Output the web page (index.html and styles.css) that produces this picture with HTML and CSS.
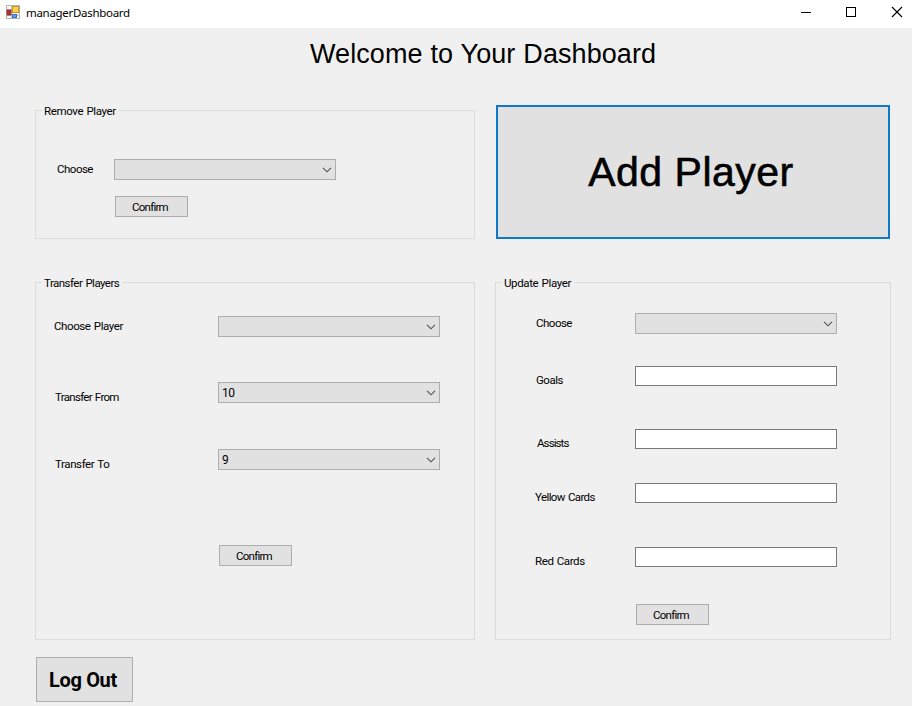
FILE: index.html
```html
<!DOCTYPE html>
<html lang="en">
<head>
<meta charset="utf-8">
<title>managerDashboard</title>
<link rel="stylesheet" href="styles.css">
</head>
<body>
<svg width="0" height="0" class="defs"><defs>
  <symbol id="chev" viewBox="0 0 10 6"><path d="M1 .8 5 4.8 9 .8" fill="none" stroke="#505050" stroke-width="1.1"/></symbol>
</defs></svg>
<header class="titlebar">
  <svg class="app-icon" width="14" height="14" viewBox="0 0 14 14">
    <rect x=".5" y=".5" width="13" height="13" fill="#f4f4f4" stroke="#b4b4b4"/>
    <path d="M5.500 1v12M1 4.500h5M1 10.500h12" stroke="#c4c4c4" fill="none"/>
    <rect x="1" y="5" width="4" height="5" fill="#b8342e" stroke="#8c2a2a" stroke-width=".8"/>
    <rect x="6.500" y="1.500" width="6" height="6" fill="#fcd34a" stroke="#c89420"/>
    <rect x="6.500" y="9.500" width="4" height="3" fill="#6a9cf0" stroke="#3e70cc"/>
  </svg>
  <span class="caption">managerDashboard</span>
  <svg class="controls" width="104" height="12" viewBox="0 0 104 12">
    <path d="M1 6.500h10" stroke="#000"/>
    <rect x="46.500" y="1.500" width="9" height="9" fill="none" stroke="#000"/>
    <path d="M92 1l10 10M102 1l-10 10" stroke="#000" stroke-width="1.100"/>
  </svg>
</header>
<main>
  <h1>Welcome to Your Dashboard</h1>
  <div class="panels">
    <section class="group remove">
      <h2>Remove Player</h2>
      <div class="row"><label>Choose</label><div class="combo"><svg><use href="#chev"/></svg></div></div>
      <button class="confirm">Confirm</button>
    </section>
    <button class="add">Add Player</button>
    <section class="group transfer">
      <h2>Transfer Players</h2>
      <div class="row"><label>Choose Player</label><div class="combo"><svg><use href="#chev"/></svg></div></div>
      <div class="row from"><label>Transfer From</label><div class="combo"><span>10</span><svg><use href="#chev"/></svg></div></div>
      <div class="row to"><label>Transfer To</label><div class="combo"><span>9</span><svg><use href="#chev"/></svg></div></div>
      <button class="confirm">Confirm</button>
    </section>
    <section class="group update">
      <h2>Update Player</h2>
      <div class="row"><label>Choose</label><div class="combo"><svg><use href="#chev"/></svg></div></div>
      <div class="row goals"><label>Goals</label><input type="text"></div>
      <div class="row assists"><label>Assists</label><input type="text"></div>
      <div class="row yellow"><label>Yellow Cards</label><input type="text"></div>
      <div class="row red"><label>Red Cards</label><input type="text"></div>
      <button class="confirm">Confirm</button>
    </section>
  </div>
  <button class="logout">Log Out</button>
</main>
</body>
</html>
```
FILE: styles.css
```css
* { box-sizing: border-box; }
body {
  margin: 0;
  height: 706px;
  overflow: hidden;
  background: #f0f0f0;
  color: #000;
  font: 11.5px/14px Roboto, "Liberation Sans", sans-serif;
  letter-spacing: -0.4px;
  word-spacing: 0.8px;
}
.defs { position: absolute; }
.titlebar {
  display: flex;
  align-items: center;
  height: 28px;
  padding: 0 8px 2px 6px;
  background: #fff;
}
.app-icon { margin-top: -2px; }
.caption {
  margin-left: 6px;
  font: 11.5px/16px "Noto Sans", sans-serif;
  letter-spacing: -0.3px;
}
.controls { margin: -2px 0 0 auto; }
h1 {
  height: 82px;
  margin: 0;
  padding: 10px 0 0 310px;
  font: 27px/32px "Liberation Sans", sans-serif;
  letter-spacing: 0.08px;
  word-spacing: 0.3px;
  white-space: nowrap;
}
.panels {
  display: grid;
  grid-template-columns: 440px 396px;
  grid-template-rows: 129px 358px;
  column-gap: 20px;
  row-gap: 43px;
  padding-left: 35px;
}
.group {
  position: relative;
  border: 1px solid #dcdcdc;
}
.group h2 {
  position: absolute;
  top: -7px;
  left: 6px;
  margin: 0;
  padding: 0 3px 0 2px;
  background: #f0f0f0;
  font-size: 11.5px;
  font-weight: 400;
  line-height: 14px;
  letter-spacing: -0.37px;
}
.transfer h2 { letter-spacing: -0.53px; }
.row { display: flex; align-items: flex-start; height: 20px; }
label { flex: none; white-space: nowrap; }
button {
  display: block;
  padding: 0;
  background: #e1e1e1;
  border: 1px solid #adadad;
  border-radius: 0;
  color: #000;
  font: inherit;
  letter-spacing: inherit;
}
.confirm { width: 73px; height: 21px; padding: 1px 3px 0 0; letter-spacing: -0.75px; }
.combo {
  display: flex;
  align-items: center;
  width: 222px;
  height: 21px;
  padding: 0 3px;
  background: #e1e1e1;
  border: 1px solid #adadad;
}
.combo span { font-size: 12px; }
.combo svg { width: 10px; height: 6px; margin-left: auto; }
input {
  width: 202px;
  height: 20px;
  padding: 0 3px;
  border: 1px solid #7a7a7a;
  background: #fff;
}
.remove { padding: 48px 0 0 21px; }
.remove label { width: 57px; padding-top: 3px; letter-spacing: -0.5px; }
.remove .confirm { margin: 17px 0 0 58px; }
.add {
  width: 394px;
  height: 134px;
  margin: -5px 0 0 1px;
  padding-right: 4px;
  border: 2px solid #0f78c8;
  font: 41px/46px "Liberation Sans", sans-serif;
  letter-spacing: 0.5px;
  word-spacing: 0;
  -webkit-text-stroke: 0.6px #000;
}
.transfer { padding: 33px 0 0 18px; }
.transfer label { width: 164px; padding-top: 3px; }
.transfer .from { margin-top: 46px; }
.transfer .to { margin-top: 47px; }
.transfer .from label, .transfer .to label { padding: 8px 0 0 1px; }
.transfer .from label { letter-spacing: -0.7px; }
.transfer .confirm { margin: 76px 0 0 165px; }
.update { padding: 30px 0 0 39px; }
.update label { width: 100px; padding: 3px 0 0 1px; letter-spacing: -0.5px; }
.update .combo { width: 202px; }
.update .row:not(:nth-child(2)) label { padding-top: 7px; }
.update .goals { margin-top: 33px; }
.update .assists { margin-top: 43px; }
.update .assists label { padding-left: 2px; letter-spacing: -0.9px; }
.update .yellow { margin-top: 34px; }
.update .red { margin-top: 44px; }
.update .yellow label { letter-spacing: -0.6px; }
.update .red label { letter-spacing: -0.4px; }
.update .yellow label, .update .red label { padding-left: 0; }
.update .confirm { margin: 37px 0 0 101px; }
.logout {
  width: 97px;
  height: 45px;
  margin: 17px 0 0 36px;
  padding-right: 3px;
  font: 700 20px/24px Roboto, sans-serif;
  letter-spacing: -0.35px;
}
```
